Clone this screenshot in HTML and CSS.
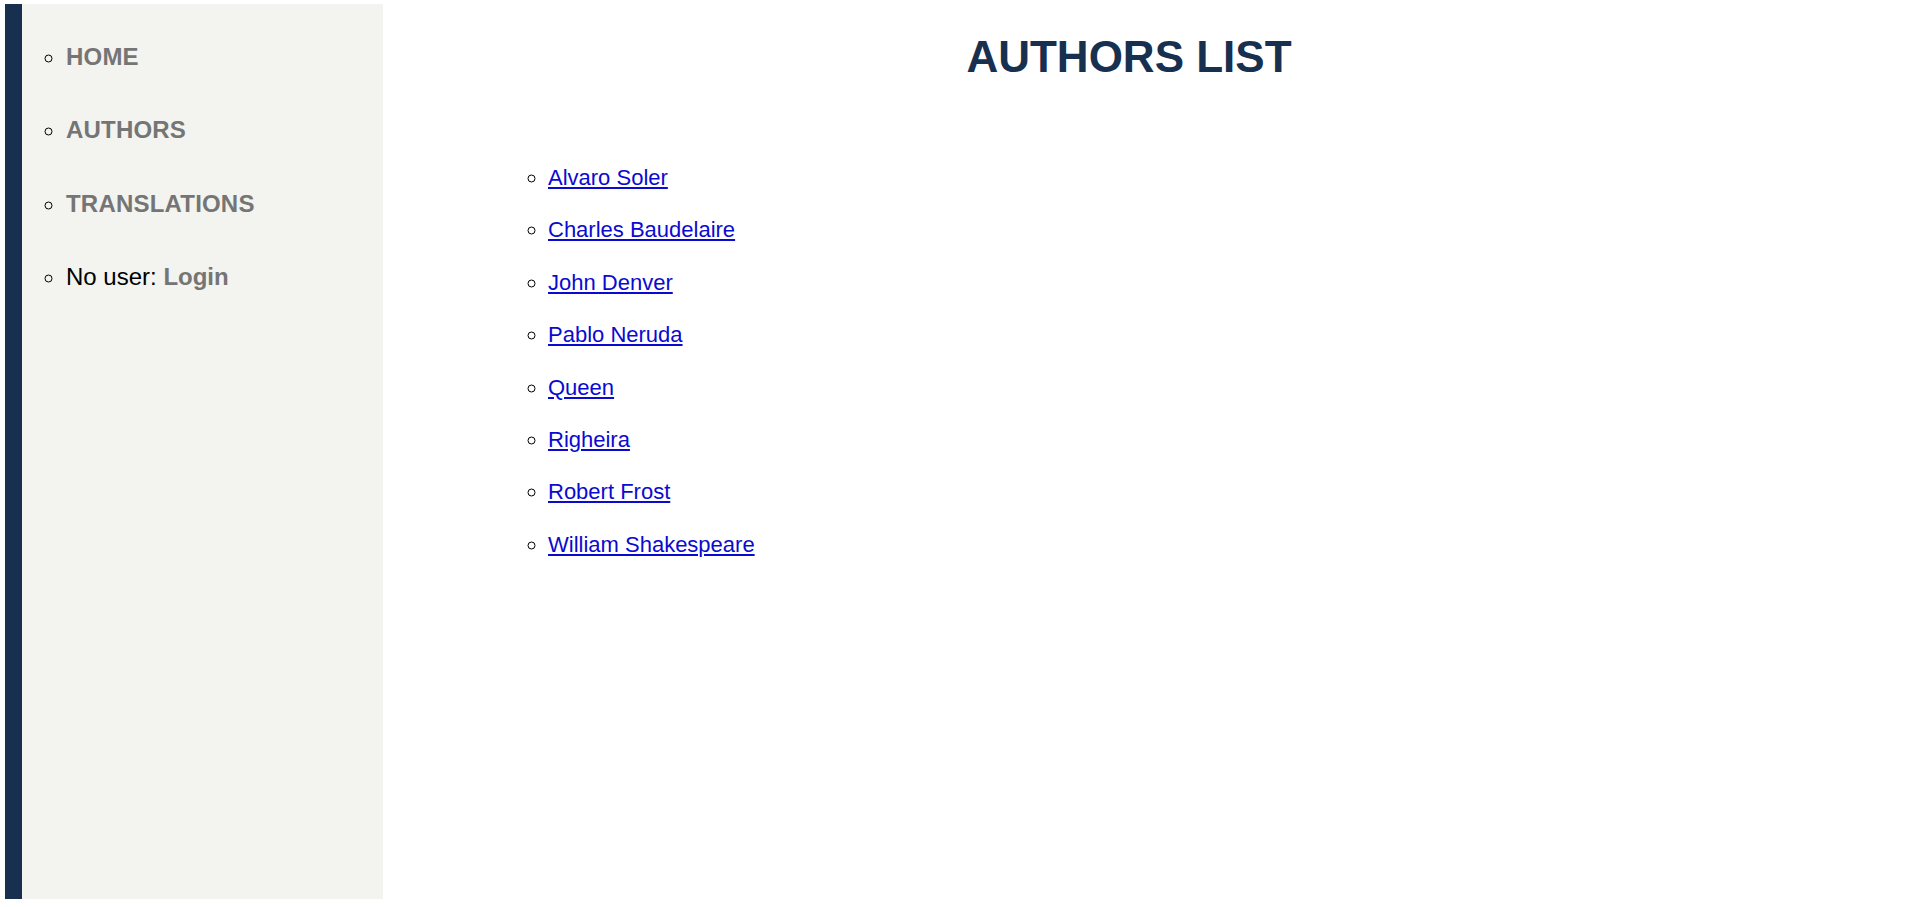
FILE: index.html
```html
<!DOCTYPE html>
<html lang="en">
<head>
<meta charset="utf-8">
<title>Authors List</title>
<link rel="stylesheet" href="styles.css">
</head>
<body>
<div class="page">
  <nav class="sidebar">
    <ul class="nav-list">
      <li><a class="nav-link" href="#">HOME</a></li>
      <li><a class="nav-link" href="#">AUTHORS</a></li>
      <li><a class="nav-link" href="#">TRANSLATIONS</a></li>
      <li class="user">No user: <a class="login-link" href="#">Login</a></li>
    </ul>
  </nav>
  <main class="main">
    <h1 class="title">AUTHORS LIST</h1>
    <ul class="authors">
      <li><a href="#">Alvaro Soler</a></li>
      <li><a href="#">Charles Baudelaire</a></li>
      <li><a href="#">John Denver</a></li>
      <li><a href="#">Pablo Neruda</a></li>
      <li><a href="#">Queen</a></li>
      <li><a href="#">Righeira</a></li>
      <li><a href="#">Robert Frost</a></li>
      <li><a href="#">William Shakespeare</a></li>
    </ul>
  </main>
</div>
</body>
</html>
```

FILE: styles.css
```css
html, body {
  margin: 0;
  padding: 0;
  background: #ffffff;
}

body {
  font-family: "Liberation Sans", Arial, sans-serif;
}

.page {
  display: flex;
  box-sizing: border-box;
  height: 907px;
  padding: 4px 0 8px 5px;
}

.sidebar {
  width: 361px;
  flex: none;
  background: #f3f3ef;
  border-left: 17px solid #17304f;
}

.nav-list {
  list-style: circle;
  margin: 0;
  padding: 16px 0 0 44px;
  font-size: 24px;
  line-height: 73.3px;
  color: #000000;
}

.nav-link {
  color: #757575;
  font-weight: bold;
  letter-spacing: 0.2px;
  text-decoration: none;
}

.login-link {
  color: #757575;
  font-weight: bold;
  text-decoration: none;
}

.main {
  flex: 1;
  padding-right: 32px;
}

.title {
  margin: 28px 0 0;
  text-align: center;
  font-size: 44px;
  line-height: 50px;
  font-weight: bold;
  color: #17304f;
}

.authors {
  list-style: circle;
  margin: 70px 0 0;
  padding: 0 0 0 165px;
  font-size: 22px;
  line-height: 52.4px;
}

.authors a {
  color: #0a0ad0;
  text-decoration: underline;
}
```
